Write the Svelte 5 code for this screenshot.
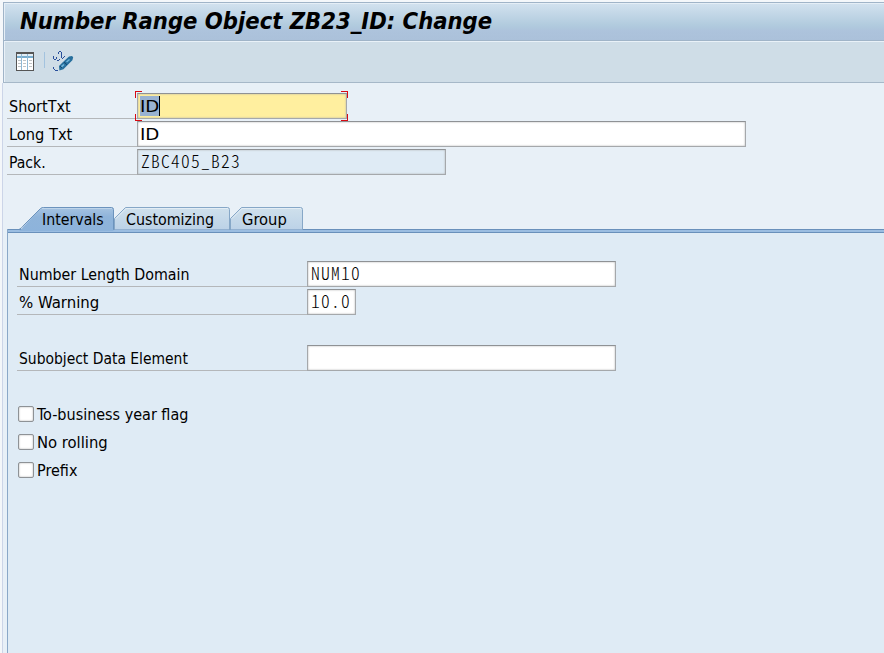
<script>
  const header = [
    { label: 'ShortTxt', lw: 62, value: 'ID', vw: 19, width: 210, kind: 'focus' },
    { label: 'Long Txt', lw: 63, value: 'ID', vw: 19, width: 609, kind: '' },
    { label: 'Pack.', lw: 37, value: 'ZBC405_B23', vw: 100, width: 309, kind: 'readonly mono' }
  ];
  const intervals = [
    { label: 'Number Length Domain', lw: 170, value: 'NUM10', vw: 50, width: 309, kind: 'mono' },
    { label: '% Warning', lw: 80, value: '10.0', vw: 40, width: 49, kind: 'mono' },
    { label: 'Subobject Data Element', lw: 169, value: '', vw: 0, width: 309, kind: 'gap' }
  ];
  const checks = [
    { label: 'To-business year flag', w: 151 },
    { label: 'No rolling', w: 71 },
    { label: 'Prefix', w: 40 }
  ];

  // Condenses or widens a piece of text to a given width.
  function fit(node, width) {
    const natural = node.offsetWidth;
    if (natural) node.style.transform = `scaleX(${width / natural})`;
  }
</script>

{#snippet row(r)}
  <div class="row {r.kind}">
    <div class="label"><span class="t" use:fit={r.lw}>{r.label}</span></div>
    <div class="field" style:width="{r.width}px">
      {#if r.value}
        {#if r.kind === 'focus'}<i class="selection"></i>{/if}
        <span class="t value" use:fit={r.vw}>{r.value}</span>
      {/if}
      {#if r.kind === 'focus'}
        <i class="corner tl"></i><i class="corner tr"></i><i class="corner bl"></i><i class="corner br"></i>
      {/if}
    </div>
  </div>
{/snippet}

<div class="window">
  <header class="title"><h1 class="t" use:fit={472}>Number Range Object ZB23_ID: Change</h1></header>
  <nav class="toolbar">
    <svg width="18" height="19" viewBox="0 0 18 19" shape-rendering="crispEdges">
      <path fill="#fff" d="M0 0h18v19H0z" />
      <path fill="#e4eef5" d="M1 2h16v2H1z" />
      <path fill="#78aed0" d="M1 4h16v2H1z" />
      <path fill="#bfc3c5" d="M2 8h3v1H2zm0 3h3v1H2zm0 3h3v1H2zm5-6h3v1H7zm0 3h3v1H7zm0 3h3v1H7zm6-6h3v1h-3zm0 3h3v1h-3zm0 3h3v1h-3z" />
      <path fill="#8fb9d6" d="M5 2h1v16H5zm6 0h1v16h-1z" />
      <path fill="#555" d="M0 0h18v19H0zM1 2v16h16V2z" fill-rule="evenodd" />
    </svg>
    <i class="sep"></i>
    <svg class="edit" width="21" height="21" viewBox="0 0 21 21">
      <g fill="#294f9b" shape-rendering="crispEdges">
        <path d="M5 1h1v2H5zM6 0h2v1H6zM8 1h1v6H8zM9 7h1v1H9zM10 6h1v1h-1zM11 5h1v1h-1z" />
        <path d="M0 5h1v3H0zM1 8h2v1H1zM3 6h1v2H3zM4 9h2v1H4zM6 8h1v1H6z" />
        <path d="M0 16h1v2H0zM1 18h1v1H1zM2 19h3v1H2z" />
      </g>
      <path fill="#276f9d" d="m6 15 4-4 6-5.500 3-.5 1.200 1.200-.8 3-5 5-4 4-4 1.300z" />
      <path fill="#71b5db" d="m8 15 2.500-2 1 1-2.500 2.500zm5-4.500 3-2.500 1 1-3 2.500z" />
      <path stroke="#174a72" d="m11 11 3 3m-7 1 2 2" />
    </svg>
  </nav>
  <main>
    <section class="head">
      {#each header as r}{@render row(r)}{/each}
    </section>
    <div class="tabs">
      <svg width="297" height="26" viewBox="0 0 297 26">
        <defs>
          <linearGradient id="on" x2="0" y2="1"><stop stop-color="#a6c3e1" /><stop offset=".4" stop-color="#8fb4da" /><stop offset="1" stop-color="#8db3db" /></linearGradient>
          <linearGradient id="off" x2="0" y2="1"><stop stop-color="#cfe0ec" /><stop offset="1" stop-color="#bcd2e7" /></linearGradient>
        </defs>
        <path fill="url(#off)" stroke="#86a7c7" d="M223.5 22.5v-11l11-11h59q2 0 2 2v20" />
        <path fill="none" stroke="#e3edf5" d="m225 11.500 10-10h59" />
        <path fill="url(#off)" stroke="#86a7c7" d="M107.5 22.5v-11l11-11h102q2 0 2 2v20" />
        <path fill="none" stroke="#e3edf5" d="m109 11.500 10-10h102" />
        <path fill="url(#on)" d="M12 24q3-2 5-5L33.500 1.500q1-1 3-1h68q2 0 2 2V24z" />
        <path fill="none" stroke="#6b93bd" d="M12 22.500q3-1.500 5-4.500L33.500 1.500q1-1 3-1h68q2 0 2 2v20" />
        <path fill="none" stroke="#bdd4ea" d="M35 1.500h70" />
      </svg>
      <div class="names">
        <span class="cell first"><span class="t" use:fit={62}>Intervals</span></span>
        <span class="cell second"><span class="t" use:fit={88}>Customizing</span></span>
        <span class="cell"><span class="t" use:fit={45}>Group</span></span>
      </div>
    </div>
    <section class="panel">
      {#each intervals as r}{@render row(r)}{/each}
      <div class="checks">
        {#each checks as c}
          <div class="check"><i class="box"></i><span class="t" use:fit={c.w}>{c.label}</span></div>
        {/each}
      </div>
    </section>
  </main>
</div>

<style>
  :global(body) { background: #f4f7fa; overflow: hidden; }
  .window {
    box-sizing: border-box;
    width: 884px;
    height: 653px;
    padding: 2px 0 0 2px;
    display: flex;
    flex-direction: column;
    font: 16px/20px "DejaVu Sans Condensed", "DejaVu Sans", sans-serif;
    font-stretch: condensed;
    color: #000;
  }
  .t { display: inline-block; white-space: pre; transform-origin: 0 50%; flex: none; }
  .title {
    box-sizing: border-box;
    height: 39px;
    margin-left: 1px;
    padding-left: 16px;
    border: 1px solid #a0b4c8;
    border-right: 0;
    box-shadow: inset 1px 1px #e5eef6;
    background: linear-gradient(#d3e2ef, #b1cbde 60%, #adc3dc 75%, #abc1da);
  }
  h1 { margin: 5px 0 0; font: italic bold 22.5px/26px "DejaVu Sans Condensed", "DejaVu Sans", sans-serif; font-stretch: condensed; }
  .toolbar {
    box-sizing: border-box;
    display: flex;
    height: 42px;
    margin-left: 1px;
    padding: 11px 0 0 12px;
    border-left: 1px solid #a0b4c8;
    border-bottom: 1px solid #a6b8c8;
    box-shadow: inset 1px 1px #e9f1f8;
    background: #cfdde7;
  }
  .sep { width: 1px; height: 16px; margin: 0 8px 0 10px; background: #a3c3df; }
  .edit { margin-top: -1px; }
  main {
    flex: 1;
    display: flex;
    flex-direction: column;
    padding: 9px 0 0 4px;
    border-left: 1px solid #ccd5e8;
    background: #e8f0f7;
  }
  .row { display: flex; height: 28px; align-items: flex-start; }
  .label {
    box-sizing: border-box;
    height: 27px;
    width: 130px;
    padding: 5px 0 0 2px;
    border-bottom: 1px solid #b4b7ba;
  }
  .field {
    position: relative;
    box-sizing: border-box;
    height: 26px;
    margin-top: 1px;
    padding: 3px 0 0 2px;
    border: 1px solid #a5a8ab;
    border-top-color: #8f9295;
    box-shadow: inset 0 0 2px #aaa;
    background: #fff;
  }
  .value { position: relative; }
  .focus .field { background: #ffef9f; }
  .readonly .field { background: #dfebf5; }
  .mono .field { padding: 1px 0 0 3px; }
  .mono .value {
    font: 300 17.5px/20px "Noto Sans CJK KR", "Liberation Mono", monospace;
    font-feature-settings: "hwid";
    letter-spacing: 1.25px;
  }
  .selection { position: absolute; left: 2px; top: 2px; width: 19px; height: 20px; background: #99b2d1; border-right: 1px solid #000; }
  .corner { position: absolute; width: 6px; height: 6px; border: 0 solid #d80a12; }
  .tl { left: -3px; top: -3px; border-top-width: 1px; border-left-width: 1px; }
  .tr { right: -2px; top: -3px; border-top-width: 1px; border-right-width: 1px; }
  .bl { left: -3px; bottom: -3px; border-bottom-width: 1px; border-left-width: 1px; }
  .br { right: -2px; bottom: -3px; border-bottom-width: 1px; border-right-width: 1px; }
  .tabs { position: relative; height: 22px; margin: 31px 0 0; }
  .tabs svg { position: absolute; z-index: 1; left: 0; top: 0; }
  .names { position: relative; z-index: 2; display: flex; padding: 3px 0 0 35px; }
  .cell { display: block; height: 19px; }
  .first { width: 84px; }
  .second { width: 116px; }
  .panel {
    flex: 1;
    padding: 31px 0 0 9px;
    border-left: 1px solid #8aa8c8;
    background: linear-gradient(#6990bb 1px, #9bbde1 1px 3px, #6990bb 3px 4px, #dfebf5 4px);
  }
  .panel .label { width: 290px; }
  .gap { margin-top: 28px; }
  .checks { margin-top: 30px; }
  .check { display: flex; height: 28px; align-items: flex-start; }
  .box {
    box-sizing: border-box;
    width: 16px;
    height: 16px;
    margin: 4px 3px 0 1px;
    border: 1px solid #8e9296;
    border-radius: 2px;
    box-shadow: inset 0 0 2px #aaa;
    background: #fff;
  }
  .check .t { margin-top: 3px; }
</style>
